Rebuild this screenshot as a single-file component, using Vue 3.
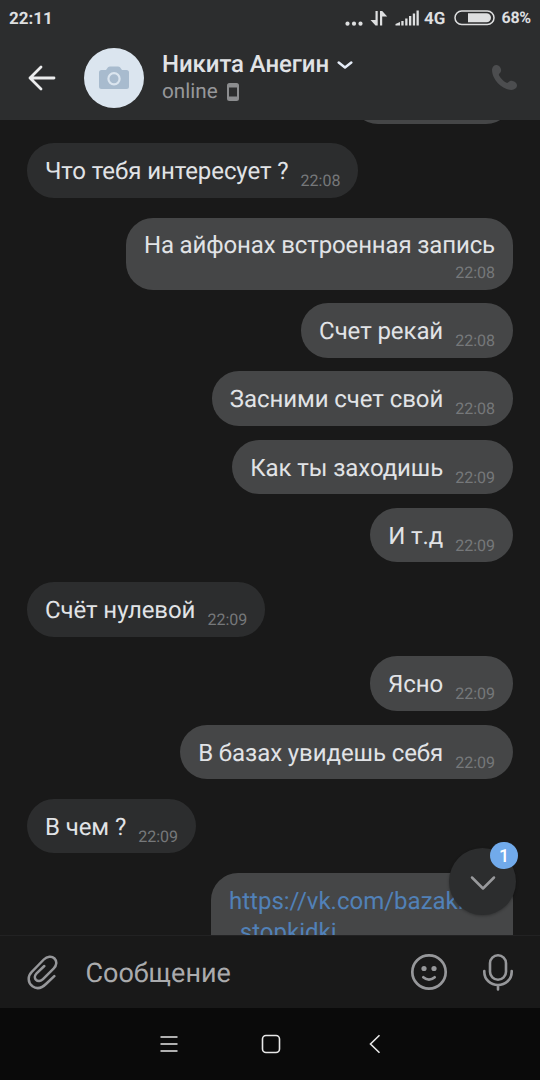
<template>
  <div class="phone">
    <header class="top">
      <div class="status">
        <span class="clock">22:11</span>
        <svg class="indicators" width="74" height="24" viewBox="0 0 74 24">
          <g fill="#dedfe0">
            <circle cx="2.5" cy="17.7" r="2.1" />
            <circle cx="9" cy="17.7" r="2.1" />
            <circle cx="15.5" cy="17.7" r="2.1" />
            <path d="M30.500 5h2.200v14.500h-2.200l-5-5.500h5zM35 5h2.200l5 5.500h-5v9H35z" />
            <path d="M50.500 19.500V18l4.500-2v3.500zM56.300 15h2.300v4.500h-2.300zM60.200 12.500h2.300v7h-2.300zM64 10h2.300v9.500H64zM67.800 7.500h2.300v12h-2.300zM71.500 4.500h2.300v15h-2.300z" />
          </g>
        </svg>
        <span class="network">4G</span>
        <svg class="battery" width="41" height="16" viewBox="0 0 41 16">
          <rect x="1" y="1" width="39" height="13.4" rx="6.7" fill="none" stroke="#dedfe0" stroke-width="1.5" />
          <path d="M14 3.2h18.5a4.5 4.5 0 0 1 0 9H14z" fill="#dedfe0" />
        </svg>
        <span class="percent">68%</span>
      </div>

      <div class="contact">
        <svg class="back" width="28" height="26" viewBox="0 0 28 26" fill="none" stroke="#ebeced" stroke-width="2.8" stroke-linecap="round" stroke-linejoin="round">
          <path d="M26 13H2M13 2L2 13l11 11" />
        </svg>
        <div class="avatar">
          <svg width="30" height="24" viewBox="0 0 30 24">
            <path d="M2.500 4H7l2-2.700Q9.800.500 11 .500h8q1.200 0 2 .800L23 4h4.500Q30 4 30 6.500v14q0 2.500-2.500 2.500h-25Q0 23 0 20.500v-14Q0 4 2.500 4z" fill="#a8bbce" />
            <circle cx="15" cy="12.800" r="5.600" fill="none" stroke="#dbe5ef" stroke-width="2.200" />
          </svg>
        </div>
        <div class="who">
          <div class="name">
            {{ contact.name }}
            <svg width="16" height="10" viewBox="0 0 16 10" fill="none" stroke="#e6edf8" stroke-width="2.500" stroke-linecap="round" stroke-linejoin="round">
              <path d="M1.700 3.500L8 8.500l6.300-5" />
            </svg>
          </div>
          <div class="presence">
            {{ contact.status }}
            <svg width="12" height="18" viewBox="0 0 12 18">
              <path fill-rule="evenodd" d="M2.500 0h7Q12 0 12 2.500v13q0 2.500-2.500 2.500h-7Q0 18 0 15.500v-13Q0 0 2.500 0zM2 4.500v9h8v-9z" fill="#8c8d8f" />
            </svg>
          </div>
        </div>
        <svg class="call" width="27" height="27" viewBox="0 0 27 27">
          <path d="M1 5.500C1.300 2.600 3.400.700 5.800 1c2 .300 4 2.400 4.300 4.700.2 1.900-.7 3-1.900 4.100-.5.500-.4 1.300 0 2 1.700 2.900 3.900 5.100 6.800 6.800.8.500 1.500.500 2 0 1.300-1.400 2.700-2 4.500-1.700 2.400.4 4.400 2.200 4.500 4.300.1 2.900-2.500 4.700-5.500 4.700C11.500 25.700 1 16 1 5.500z" fill="#4c4d4f" />
        </svg>
      </div>
    </header>

    <main class="chat">
      <div class="bubble mine previous"></div>
      <div
        v-for="msg in messages"
        :key="msg.id"
        class="bubble"
        :class="{ mine: msg.mine, stacked: msg.stacked, turn: msg.turn }"
      >
        <span class="text">{{ msg.content }}</span>
        <span class="time">{{ msg.time }}</span>
      </div>
      <div class="bubble mine turn link">
        <a>https://vk.com/bazaki<br>_stopkidki</a>
      </div>

      <button class="scroll-down">
        <svg width="26" height="16" viewBox="0 0 26 16" fill="none" stroke="#98999c" stroke-width="2.500" stroke-linecap="round" stroke-linejoin="round">
          <path d="M2 2.500l11 11 11-11" />
        </svg>
        <span class="badge">{{ unread }}</span>
      </button>
    </main>

    <footer class="composer">
      <svg class="clip" width="32" height="36" viewBox="0 0 32 36" fill="none" stroke="#96979a" stroke-width="2.500" stroke-linecap="round" stroke-linejoin="round">
        <path d="M28.300 22.200L20.500 29.500c-4.500 4.500-9.700 6-14 2.800-5-3.900-4.900-10.200-.7-14.400L17.800 5.500c3.400-3.400 8-3.700 10.700-1 2.700 2.800 2.200 7-.7 9.900L17 25.200c-2.200 2.200-5.200 2.500-7 .7-1.700-1.800-1.400-4.500.6-6.500l7.700-7.400" />
      </svg>
      <input v-model="draft" type="text" placeholder="Сообщение">
      <svg class="smile" width="38" height="38" viewBox="0 0 38 38" fill="none" stroke="#96979a" stroke-width="2.700" stroke-linecap="round">
        <circle cx="19" cy="19" r="16.700" />
        <path d="M13.300 24.300q5.700 4.800 11.400 0" />
        <circle cx="14" cy="15.500" r="2.600" fill="#96979a" stroke="none" />
        <circle cx="24" cy="15.500" r="2.600" fill="#96979a" stroke="none" />
      </svg>
      <svg class="mic" width="32" height="38" viewBox="0 0 32 38" fill="none" stroke="#96979a" stroke-width="2.600" stroke-linecap="round">
        <rect x="8" y="2.300" width="16" height="24.400" rx="8" />
        <path d="M2.300 18v1C2.300 26.500 8.500 32 16 32s13.700-5.500 13.700-13v-1M16 32v4.500" />
      </svg>
    </footer>

    <nav class="system">
      <svg width="18" height="18" viewBox="0 0 18 18" stroke="#e8e8e8" stroke-width="1.600">
        <path d="M.5 2h17M.5 9h17M.5 16h17" />
      </svg>
      <svg class="home" width="20" height="20" viewBox="0 0 20 20" fill="none" stroke="#e8e8e8" stroke-width="1.600">
        <rect x="1.500" y="1.500" width="17" height="17" rx="3.500" />
      </svg>
      <svg width="12" height="20" viewBox="0 0 12 20" fill="none" stroke="#e8e8e8" stroke-width="1.600">
        <path d="M10.500 1.200L1.500 10l9 8.800" />
      </svg>
    </nav>
  </div>
</template>

<script setup>
  import { ref } from 'vue'

  const contact = ref({
    name: 'Никита Анегин',
    status: 'online',
  })

  const draft = ref('')
  const unread = ref(1)

  // turn: the other side starts talking, so the gap is bigger
  const messages = ref([
    { id: 1, content: 'Что тебя интересует ?', time: '22:08', mine: false, turn: true },
    { id: 2, content: 'На айфонах встроенная запись', time: '22:08', mine: true, turn: true, stacked: true },
    { id: 3, content: 'Счет рекай', time: '22:08', mine: true },
    { id: 4, content: 'Засними счет свой', time: '22:08', mine: true },
    { id: 5, content: 'Как ты заходишь', time: '22:09', mine: true },
    { id: 6, content: 'И т.д', time: '22:09', mine: true },
    { id: 7, content: 'Счёт нулевой', time: '22:09', mine: false, turn: true },
    { id: 8, content: 'Ясно', time: '22:09', mine: true, turn: true },
    { id: 9, content: 'В базах увидешь себя', time: '22:09', mine: true },
    { id: 10, content: 'В чем ?', time: '22:09', mine: false, turn: true },
  ])
</script>

<style>
  body {
    margin: 0;
    background: #0a0a0a;
  }
</style>

<style scoped>
  * {
    box-sizing: border-box;
  }

  svg {
    display: block;
    flex: none;
  }

  .phone {
    display: flex;
    flex-direction: column;
    width: 540px;
    height: 1080px;
    overflow: hidden;
    background: #191919;
    color: #e1e3e6;
    font-family: Roboto, "Noto Sans", sans-serif;
    text-rendering: geometricPrecision;
  }

  .top {
    flex: none;
    height: 120px;
    background: #2c2d2e;
  }

  .status {
    display: flex;
    align-items: center;
    height: 36px;
    padding: 0 9px;
    color: #dedfe0;
    font-size: 17px;
    font-weight: 700;
    line-height: 20px;
  }

  .clock {
    margin-right: auto;
    padding-top: 2px;
  }

  .network {
    margin-left: 5px;
    padding-top: 2px;
  }

  .battery {
    margin-left: 9px;
  }

  .percent {
    margin-left: 6px;
    font-size: 16px;
    letter-spacing: -0.2px;
  }

  .contact {
    display: flex;
    align-items: center;
    height: 84px;
    padding: 0 22px 0 28px;
  }

  .avatar {
    display: grid;
    place-items: center;
    width: 60px;
    height: 60px;
    margin-left: 28px;
    border-radius: 50%;
    background: #dbe5ef;
  }

  .who {
    flex: 1;
    margin-left: 18px;
  }

  .name,
  .presence {
    display: flex;
    align-items: center;
    line-height: 28px;
  }

  .name {
    gap: 8px;
    font-size: 24px;
    font-weight: 500;
    letter-spacing: -0.08px;
  }

  .presence {
    gap: 9px;
    color: #96979a;
    font-size: 20.700px;
    line-height: 29px;
  }

  .call {
    margin-bottom: 2px;
  }

  .chat {
    position: relative;
    display: flex;
    flex: none;
    flex-direction: column;
    align-items: flex-start;
    height: 815px;
    padding: 0 27px;
    overflow: hidden;
  }

  .bubble {
    display: flex;
    flex: none;
    align-items: flex-end;
    gap: 12px;
    height: 54.600px;
    margin-top: 13.620px;
    padding: 0 18px;
    border-radius: 27px;
    background: #2c2d2e;
    white-space: nowrap;
  }

  .mine {
    align-self: flex-end;
    background: #454647;
  }

  .turn {
    margin-top: 19.700px;
  }

  .previous {
    width: 162px;
    margin-top: -51px;
  }

  .text {
    padding-bottom: 12.600px;
    font-size: 24px;
    letter-spacing: -0.08px;
    line-height: 28px;
  }

  .time {
    padding-bottom: 6.500px;
    color: #76787a;
    font-size: 16px;
    line-height: 20px;
  }

  .stacked {
    flex-direction: column;
    justify-content: flex-end;
    gap: 0;
    height: 72px;
  }

  .stacked .text {
    padding-bottom: 4px;
    letter-spacing: -0.14px;
  }

  .link {
    align-items: flex-start;
    width: 302px;
    height: 120px;
    padding-top: 12.500px;
  }

  .link a {
    color: #5181b8;
    font-size: 24px;
    line-height: 31px;
  }

  .scroll-down {
    position: absolute;
    right: 24px;
    bottom: 20px;
    display: grid;
    place-items: center;
    width: 67px;
    height: 67px;
    padding: 2px 0 0;
    border: none;
    border-radius: 50%;
    background: #2c2d2e;
    box-shadow: 0 1px 3px rgba(0, 0, 0, 0.3);
  }

  .badge {
    position: absolute;
    top: -6px;
    right: -2px;
    width: 28px;
    height: 27px;
    border-radius: 14px;
    background: #71aaeb;
    color: white;
    font-family: Roboto, sans-serif;
    font-size: 18px;
    font-weight: 500;
    line-height: 27px;
    text-align: center;
  }

  .composer {
    display: flex;
    flex: none;
    align-items: center;
    height: 73px;
    padding: 0 26px;
    border-top: 1px solid #222223;
  }

  .composer input {
    flex: 1;
    min-width: 0;
    margin-left: 27.500px;
    padding: 2px 0 0;
    border: none;
    outline: none;
    background: none;
    color: #e1e3e6;
    font: 27px Roboto, sans-serif;
    text-rendering: geometricPrecision;
  }

  .composer input::placeholder {
    color: #aaabad;
    opacity: 1;
  }

  .mic {
    margin-left: 34px;
  }

  .system {
    display: flex;
    flex: 1;
    align-items: center;
    justify-content: space-between;
    padding: 0 159px 0 160px;
    background: #0a0a0a;
  }

  .home {
    margin-right: 6px;
  }
</style>
